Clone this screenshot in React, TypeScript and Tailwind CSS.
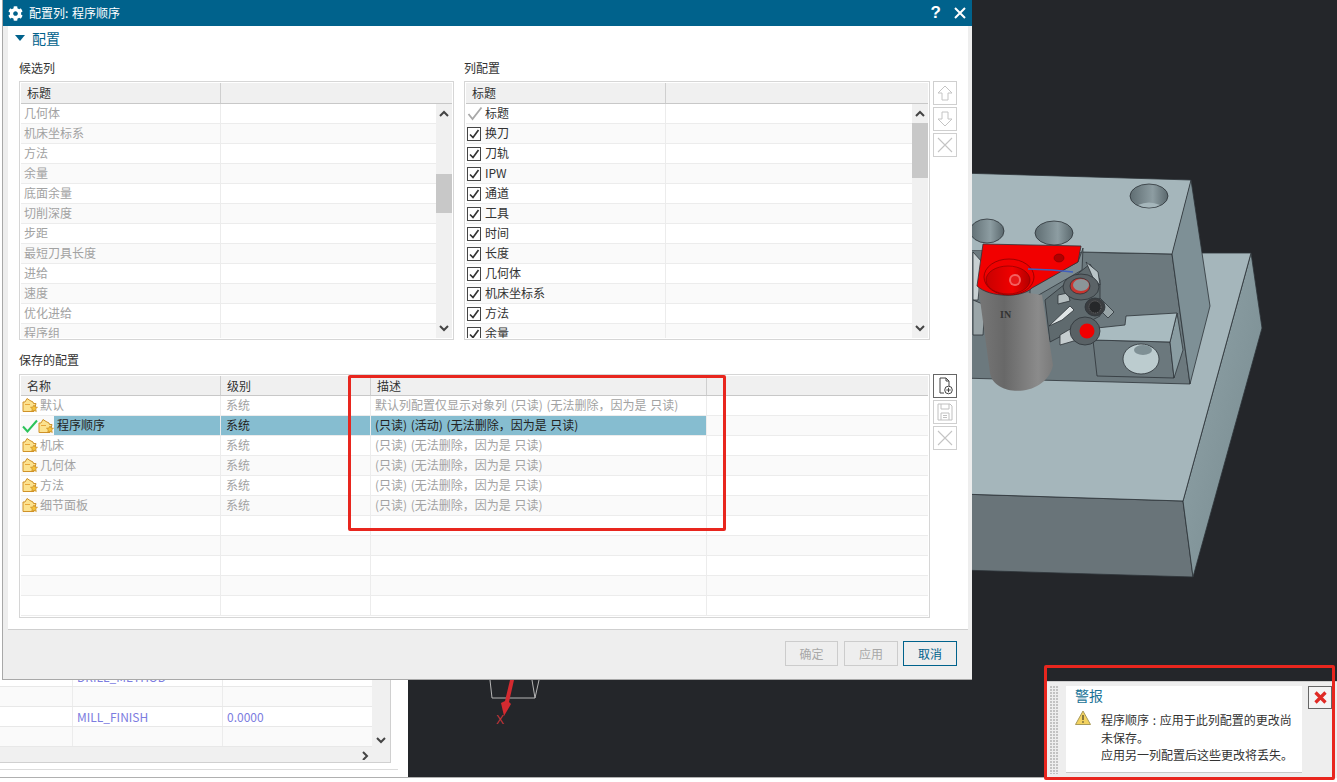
import React from "react";
import { FaCog } from "react-icons/fa";

const FONT = "font-['Noto_Sans_CJK_SC','Liberation_Sans',sans-serif]";

function Chevron({ dir }: { dir: "up" | "down" | "right" }) {
  const d = dir === "up" ? "M1 6 L5 2 L9 6" : dir === "down" ? "M1 2 L5 6 L9 2" : "M3 1 L7 5 L3 9";
  return (
    <svg width="10" height="10" viewBox="0 0 10 8" fill="none" stroke="#444" strokeWidth="2">
      <path d={d} />
    </svg>
  );
}

function Scrollbar({ top, thumb, gap }: { top: number; thumb: number; gap: number }) {
  return (
    <div className="w-[16px] shrink-0 bg-[#f0f0f0] flex flex-col items-center">
      <div className="w-full flex items-center justify-center" style={{ height: top }}>
        <Chevron dir="up" />
      </div>
      <div style={{ height: gap }} />
      <div className="w-full bg-[#c8c8c8]" style={{ height: thumb }} />
      <div className="mt-auto h-[20px] w-full flex items-center justify-center">
        <Chevron dir="down" />
      </div>
    </div>
  );
}

function Checkbox() {
  return (
    <span className="w-[14px] h-[14px] border border-[#444] bg-white flex items-center justify-center shrink-0">
      <svg width="12" height="12" viewBox="0 0 12 12" fill="none" stroke="#333" strokeWidth="1.7">
        <path d="M2 6.5 L5 9.5 L10.5 2" />
      </svg>
    </span>
  );
}

function GrayCheck() {
  return (
    <svg width="16" height="16" viewBox="0 0 16 16" fill="none" stroke="#a8a8a8" strokeWidth="1.8" className="shrink-0">
      <path d="M1.5 9 L5.5 14 L14.5 2.5" />
    </svg>
  );
}

function FolderIcon() {
  return (
    <svg width="16" height="16" viewBox="0 0 16 16" className="shrink-0">
      <path d="M1 14.5 V5 L3 5 L5 1.5 L8 3.5 L11 5 L11.5 6.5 L14 6.5 L12 14.5 Z" fill="#fce28f" stroke="#cf9228" strokeWidth="1" />
      <path d="M3 7.5 L8 7.5" stroke="#e8a63c" strokeWidth="1" />
      <path d="M12 8 L13 10 L15.5 10.3 L13.7 11.8 L14.3 14.5 L12 13.2 L9.7 14.5 L10.3 11.8 L8.5 10.3 L11 10 Z" fill="#f6c33c" stroke="#c98c22" strokeWidth="0.7" />
    </svg>
  );
}

function HeaderCell({ width, children, grow }: { width?: number; children?: React.ReactNode; grow?: boolean }) {
  return (
    <div
      className={`h-full flex items-center pl-[6px] border-r border-[#cfcfcf] text-[#333] shrink-0 ${grow ? "flex-1 border-r-0" : ""}`}
      style={grow ? undefined : { width }}
    >
      {children}
    </div>
  );
}

function Cell({ width, children, grow, pl = 5, lift = true }: { width?: number; children?: React.ReactNode; grow?: boolean; pl?: number; lift?: boolean }) {
  return (
    <div
      className={`h-full flex items-center border-r border-[#ececec] whitespace-nowrap overflow-hidden shrink-0 ${lift ? "pb-[2px]" : ""} ${grow ? "flex-1 border-r-0" : ""}`}
      style={grow ? { paddingLeft: pl } : { width, paddingLeft: pl }}
    >
      {children}
    </div>
  );
}

const candidates = ["几何体", "机床坐标系", "方法", "余量", "底面余量", "切削深度", "步距", "最短刀具长度", "进给", "速度", "优化进给", "程序组"];
const configured = ["换刀", "刀轨", "IPW", "通道", "工具", "时间", "长度", "几何体", "机床坐标系", "方法", "余量"];

function TopTable({ className, colW, children, top, thumb, gap }: { className: string; colW: number; children: React.ReactNode; top: number; thumb: number; gap: number }) {
  return (
    <div className={`h-[259px] border border-[#d6d6d6] p-px flex flex-col overflow-hidden bg-white ${className}`}>
      <div className="h-[21px] shrink-0 flex bg-[#f0f0f0] border-b border-[#c8c8c8]">
        <HeaderCell width={colW}>标题</HeaderCell>
        <HeaderCell grow />
      </div>
      <div className="flex-1 min-h-0 flex">
        <div className="flex-1 min-w-0 overflow-hidden">{children}</div>
        <Scrollbar top={top} thumb={thumb} gap={gap} />
      </div>
    </div>
  );
}

function ToolBtn({ children, active }: { children: React.ReactNode; active?: boolean }) {
  return (
    <div className={`w-[24px] h-[24px] border flex items-center justify-center bg-white ${active ? "border-[#666]" : "border-[#cfcfcf]"}`}>
      {children}
    </div>
  );
}

const XIcon = () => (
  <svg width="20" height="20" viewBox="0 0 20 20" stroke="#c4c4c4" strokeWidth="1.1" fill="none">
    <path d="M3 3 L17 17 M17 3 L3 17" />
  </svg>
);

const saved = [
  ["默认", "默认列配置仅显示对象列 (只读) (无法删除，因为是 只读)"],
  ["程序顺序", "(只读) (活动) (无法删除，因为是 只读)"],
  ["机床", "(只读) (无法删除，因为是 只读)"],
  ["几何体", "(只读) (无法删除，因为是 只读)"],
  ["方法", "(只读) (无法删除，因为是 只读)"],
  ["细节面板", "(只读) (无法删除，因为是 只读)"],
  ["", ""],
  ["", ""],
  ["", ""],
  ["", ""],
  ["", ""],
];

function SavedTable() {
  return (
    <div className="flex-1 h-[244px] border border-[#d6d6d6] p-px flex flex-col overflow-hidden">
      <div className="h-[20px] shrink-0 flex bg-[#f0f0f0] border-b border-[#c8c8c8]">
        <HeaderCell width={200}>名称</HeaderCell>
        <HeaderCell width={150}>级别</HeaderCell>
        <HeaderCell width={336}>描述</HeaderCell>
        <HeaderCell grow />
      </div>
      {saved.map((r, i) => {
        const sel = i === 1;
        const empty = !r[0];
        return (
          <div key={i} className={`h-[20px] shrink-0 flex border-b border-[#ececec] ${i % 2 ? "bg-[#fafafa]" : "bg-white"} ${sel ? "text-[#222]" : "text-[#a2a2a2]"}`}>
            {sel ? (
              <div className="w-[200px] h-full flex items-center shrink-0">
                <svg width="16" height="16" viewBox="0 0 16 16" fill="none" stroke="#2cc35a" strokeWidth="2" className="ml-px shrink-0">
                  <path d="M1 8.5 L5.5 13.5 L15 2.5" />
                </svg>
                <FolderIcon />
                <div className="flex-1 h-full bg-[#86bdd0] flex items-center pl-[3px] pb-[2px] border-r border-[#ececec]">{r[0]}</div>
              </div>
            ) : (
              <Cell width={200} pl={1}>
                {!empty && (
                  <span className="flex items-center gap-[2px]">
                    <FolderIcon />
                    {r[0]}
                  </span>
                )}
              </Cell>
            )}
            <div className={`flex h-full ${sel ? "bg-[#86bdd0]" : ""}`}>
              <Cell width={150}>{!empty && "系统"}</Cell>
              <Cell width={336} pl={4}>{r[1]}</Cell>
            </div>
            <Cell grow />
          </div>
        );
      })}
    </div>
  );
}

function Dialog() {
  return (
    <div className={`absolute left-[2px] top-0 w-[970px] h-[680px] flex flex-col bg-[#eeeeee] border-l border-b border-[#a8a8a8] text-[12px] [word-spacing:1px] ${FONT}`}>
      <div className="h-[26px] shrink-0 bg-[#00628c] flex items-center text-white pl-[5px]">
        <FaCog className="w-[15px] h-[15px]" />
        <span className="ml-[6px]">配置列: 程序顺序</span>
        <span className="ml-auto font-bold text-[17px] font-['Liberation_Sans',sans-serif] mr-[12px]">?</span>
        <svg width="14" height="14" viewBox="0 0 14 14" stroke="white" strokeWidth="2" className="mr-[5px]">
          <path d="M2 2 L12 12 M12 2 L2 12" />
        </svg>
      </div>
      <div className="flex-1 min-h-0 ml-[5px] mr-[4px] bg-white border-b border-[#cfcfcf] pl-[11px] flex flex-col">
        <div className="h-[26px] shrink-0 flex items-center pb-[2px] text-[#00628c] text-[14px]">
          <svg width="10" height="7" viewBox="0 0 10 7" className="ml-[-4px] mr-[7px]" fill="#00628c">
            <path d="M0 0 H10 L5 6 Z" />
          </svg>
          配置
        </div>
        <div className="h-[29px] shrink-0 flex text-[#333]">
          <div className="w-[445px] pt-[7px] leading-[18px]">候选列</div>
          <div className="pt-[7px] leading-[18px]">列配置</div>
        </div>
        <div className="flex shrink-0">
          <TopTable className="w-[435px] text-[#a2a2a2]" colW={200} top={20} gap={50} thumb={39}>
            {candidates.map((c, i) => (
              <div key={c} className={`h-[20px] flex border-b border-[#ececec] ${i % 2 ? "bg-[#fafafa]" : ""}`}>
                <Cell width={200} pl={3}>{c}</Cell>
                <Cell grow />
              </div>
            ))}
          </TopTable>
          <div className="w-[10px]" />
          <TopTable className="w-[466px] text-[#333]" colW={200} top={19} gap={0} thumb={55}>
            <div className="h-[20px] flex border-b border-[#ececec]">
              <Cell width={200} pl={1}>
                <span className="flex items-center gap-[2px]">
                  <GrayCheck />
                  标题
                </span>
              </Cell>
              <Cell grow />
            </div>
            {configured.map((c, i) => (
              <div key={i} className={`h-[20px] flex border-b border-[#ececec] ${i % 2 ? "" : "bg-[#fafafa]"}`}>
                <Cell width={200} pl={1} lift={false}>
                  <span className="flex items-center gap-[4px] leading-[16px]">
                    <Checkbox />
                    <span className="mt-[-2px]">{c}</span>
                  </span>
                </Cell>
                <Cell grow />
              </div>
            ))}
          </TopTable>
          <div className="ml-[3px] flex flex-col gap-[2px]">
            <ToolBtn>
              <svg width="18" height="18" viewBox="0 0 18 18" fill="none" stroke="#c4c4c4" strokeWidth="1">
                <path d="M9 2 L16 9 H12 V16 H6 V9 H2 Z" />
              </svg>
            </ToolBtn>
            <ToolBtn>
              <svg width="18" height="18" viewBox="0 0 18 18" fill="none" stroke="#c4c4c4" strokeWidth="1">
                <path d="M9 16 L16 9 H12 V2 H6 V9 H2 Z" />
              </svg>
            </ToolBtn>
            <ToolBtn>
              <XIcon />
            </ToolBtn>
          </div>
        </div>
        <div className="h-[34px] shrink-0 pt-[11px] leading-[18px] text-[#333]">保存的配置</div>
        <div className="flex">
          <SavedTable />
          <div className="ml-[3px] mr-[11px] flex flex-col gap-[2px]">
            <ToolBtn active>
              <svg width="20" height="20" viewBox="0 0 20 20" fill="none" stroke="#444" strokeWidth="1">
                <path d="M5 17 V2 H11 L14 5 V10 M11 2 V5 H14 M5 17 H9" />
                <circle cx="13.5" cy="14" r="3.8" />
                <path d="M13.5 11.8 V16.2 M11.3 14 H15.7" />
              </svg>
            </ToolBtn>
            <ToolBtn>
              <svg width="20" height="20" viewBox="0 0 20 20" fill="none" stroke="#c0c0c0" strokeWidth="1">
                <path d="M3 2 H15 L17 4 V18 H3 Z" />
                <path d="M6 2 V7 H14 V2 M6 18 V11 H14 V18 M8 13.5 H12 M8 15.5 H12" />
              </svg>
            </ToolBtn>
            <ToolBtn>
              <XIcon />
            </ToolBtn>
          </div>
        </div>
      </div>
      <div className="h-[49px] shrink-0 flex items-start justify-end pt-[11px] pr-[15px] gap-[5px]">
        <div className="w-[53px] h-[25px] mr-px border border-[#cccccc] flex items-center justify-center text-[#a8a8a8]">确定</div>
        <div className="w-[54px] h-[25px] border border-[#cccccc] flex items-center justify-center text-[#a8a8a8]">应用</div>
        <div className="w-[54px] h-[25px] border border-[#00628c] flex items-center justify-center text-[#00628c]">取消</div>
      </div>
    </div>
  );
}

function Alert() {
  return (
    <div className={`absolute left-[1047px] top-[681px] w-[290px] h-[97px] bg-[#eeeeee] border-t border-[#cfcfcf] flex items-start text-[12px] [word-spacing:1px] ${FONT}`}>
      <svg width="8" height="88" className="ml-[3px] mt-[4px] shrink-0">
        <defs>
          <pattern id="grip" width="3" height="3" patternUnits="userSpaceOnUse">
            <rect width="2" height="2" fill="#c2c2c2" />
          </pattern>
        </defs>
        <rect width="8" height="88" fill="url(#grip)" />
      </svg>
      <div className="ml-[8px] mt-[4px] w-[236px] h-[87px] shrink-0 bg-white border-b border-[#c8c8c8] pl-[9px] relative">
        <div className="text-[14px] text-[#1a7396] leading-[20px] mt-[-1px]">警报</div>
        <div className="flex mt-[5px]">
          <svg width="16" height="16" viewBox="0 0 16 16" className="shrink-0">
            <path d="M8 1 L15.5 14.5 H0.5 Z" fill="#f3d25f" stroke="#a89a5a" strokeWidth="1" />
            <path d="M8 5 V10 M8 11.2 V12.8" stroke="#5a5030" strokeWidth="1.4" />
          </svg>
          <div className="ml-[10px] w-[200px] text-[#333] leading-[17.5px] mt-[1px]">
            程序顺序 : 应用于此列配置的更改尚未保存。
            <br />
            应用另一列配置后这些更改将丢失。
          </div>
        </div>
      </div>
      <div className="ml-[6px] mt-[4px] w-[24px] h-[23px] border border-[#666] bg-[#f4f4f4] flex items-center justify-center shrink-0">
        <svg width="13" height="13" viewBox="0 0 13 13" stroke="#df2a25" strokeWidth="3.2">
          <path d="M1.5 1.5 L11.5 11.5 M11.5 1.5 L1.5 11.5" />
        </svg>
      </div>
    </div>
  );
}

function Model() {
  const s = { stroke: "#2d3438", strokeWidth: 0.8 };
  return (
    <svg viewBox="408 0 929 777" className="w-full h-full block">
      <defs>
        <linearGradient id="hole" x1="0" x2="1" y1="0" y2="0">
          <stop offset="0" stopColor="#5f6d72" />
          <stop offset="0.6" stopColor="#8d9da2" />
          <stop offset="1" stopColor="#5a686d" />
        </linearGradient>
        <linearGradient id="cyl" x1="0" x2="1" y1="0" y2="0">
          <stop offset="0" stopColor="#777777" />
          <stop offset="0.35" stopColor="#686868" />
          <stop offset="0.8" stopColor="#8b8b8b" />
          <stop offset="1" stopColor="#7a7a7a" />
        </linearGradient>
        <linearGradient id="redc" x1="0" x2="1" y1="0" y2="0">
          <stop offset="0" stopColor="#c90000" />
          <stop offset="0.6" stopColor="#f00000" />
          <stop offset="1" stopColor="#b30000" />
        </linearGradient>
        <linearGradient id="side" x1="0" x2="1" y1="0" y2="1">
          <stop offset="0" stopColor="#92a5aa" />
          <stop offset="1" stopColor="#76898e" />
        </linearGradient>
      </defs>
      {/* lower block */}
      <polygon points="960,494 1183,501 1193,577 960,570" fill="#697479" {...s} />
      <polygon points="1251,253 1262,328 1193,577 1183,501" fill="url(#side)" {...s} />
      <polygon points="1202,253 1251,253 1183,501 960,494 960,300" fill="#a5b6bb" {...s} />
      {/* pocket */}
      <polygon points="960,250 1172,254 1190,384 960,378" fill="#6c797e" {...s} />
      <polygon points="960,173 960,250 1172,254 1191,180" fill="#a5b6bb" />
      <line x1="960" y1="173" x2="1191" y2="180" stroke="#2d3438" strokeWidth="0.8" />
      <line x1="1082" y1="252" x2="1172" y2="254" stroke="#2d3438" strokeWidth="0.8" />
      <polygon points="1191,180 1210,306 1190,384 1172,254" fill="#7e9096" {...s} />
      {/* holes */}
      <ellipse cx="1149" cy="196" rx="19" ry="12" fill="url(#hole)" {...s} />
      <path d="M1138,205 Q1149,200 1160,205 Q1149,210 1138,205 Z" fill="#a5b6bb" />
      <ellipse cx="1054" cy="233" rx="19" ry="12" fill="url(#hole)" {...s} />
      <ellipse cx="987" cy="231" rx="17" ry="12" fill="url(#hole)" {...s} />
      {/* fixture bits */}
      <polygon points="973,252 982,262 978,300 973,300" fill="#c8d0d2" {...s} />
      <polygon points="973,300 985,305 983,335 973,335" fill="#9aa5a8" {...s} />
      <polygon points="1045,300 1090,264 1100,280 1100,316 1050,342" fill="#5f6a6e" {...s} />
      <polygon points="1049,326 1070,306 1074,310 1062,320" fill="#dfe5e6" {...s} />
      <polygon points="1058,295 1068,293 1070,301 1058,304" fill="#b5bec0" {...s} />
      <polygon points="1060,335 1072,328 1077,340 1060,345" fill="#c5cdcf" {...s} />
      <polygon points="1086,262 1098,272 1100,285 1094,280" fill="#b9c4c7" {...s} />
      <polygon points="1100,298 1114,312 1108,318 1096,306" fill="#98a4a7" {...s} />
      {/* stepped block */}
      <polygon points="1093,340 1170,342 1174,378 1097,376" fill="#6b787d" {...s} />
      <polygon points="1177,313 1183,350 1174,378 1170,342" fill="#8a9da2" {...s} />
      <polygon points="1093,340 1097,328 1125,325 1126,316 1177,313 1170,342" fill="#a9bbc0" {...s} />
      <ellipse cx="1141" cy="359" rx="18" ry="15" fill="#bccccf" {...s} />
      <ellipse cx="1143" cy="350" rx="9" ry="5" fill="#7f9095" />
      {/* washers */}
      <ellipse cx="1081" cy="287" rx="18" ry="13" fill="#5b6367" {...s} />
      <ellipse cx="1080" cy="286" rx="10" ry="8" fill="#c9342f" {...s} />
      <ellipse cx="1081" cy="285" rx="8" ry="6" fill="#8b9598" />
      <ellipse cx="1095" cy="307" rx="10" ry="9" fill="#3a3d40" {...s} />
      <circle cx="1095" cy="307" r="6" fill="#26282a" stroke="#6a6a6a" strokeWidth="1" strokeDasharray="1 1" />
      <ellipse cx="1085" cy="331" rx="15" ry="14" fill="#596165" {...s} />
      <circle cx="1087" cy="331" r="7.5" fill="#f00000" />
      {/* arm */}
      <polygon points="1030,288 1078,262 1083,248 1082,270 1030,300" fill="#7d8b90" {...s} />
      {/* cylinder */}
      <path d="M978,285 L990,373 C994,398 1046,398 1053,365 L1042,295 Z" fill="url(#cyl)" />
      <text x="1000" y="318" fontSize="10" fontWeight="700" fontFamily="'Liberation Serif',serif" fill="#333">IN</text>
      {/* red top */}
      <path d="M983,244 L1081,246 L1078,262 L1032,288 C1022,298 990,298 977,286 Z" fill="#f20000" {...s} />
      <ellipse cx="1009" cy="277" rx="25" ry="18" fill="#f00000" stroke="#7a0000" strokeWidth="0.7" />
      <ellipse cx="1008" cy="280" rx="22" ry="14" fill="url(#redc)" stroke="#7a0000" strokeWidth="0.6" />
      <circle cx="1015" cy="280" r="6" fill="#f36060" />
      <circle cx="1015" cy="280" r="4" fill="#e81818" />
      <ellipse cx="1059" cy="258" rx="5" ry="4" fill="#b00000" stroke="#6a0000" strokeWidth="0.5" />
      <path d="M1028,269 L1052,270 L1073,272" stroke="#3f5fc0" strokeWidth="1.4" fill="none" />
      {/* axis */}
      <path d="M490,680 L492,698 L535,698 L539,680 M532,680 L535,698" stroke="#b5b5b5" strokeWidth="1" fill="none" />
      <path d="M510,680 L514,680 L509,702 L511,704 L504,716 L501,703 L505,701 Z" fill="#d42a30" />
      <text x="496" y="724" fontSize="12" fill="#c9353a" fontFamily="'Liberation Sans',sans-serif">X</text>
    </svg>
  );
}

function LeftPanel() {
  const rows = [
    ["DRILL_METHOD", ""],
    ["", ""],
    ["MILL_FINISH", "0.0000"],
    ["", ""],
  ];
  return (
    <div className={`w-[408px] h-full shrink-0 bg-white flex flex-col justify-end text-[12px] ${FONT}`}>
      <div className="w-[391px] border-r border-[#d0d0d0] flex">
        <div className="flex-1 min-w-0">
          {rows.map((r, i) => (
            <div key={i} className={`h-[20px] flex border-b border-[#e8e8e8] text-[#7c7ce0] ${i % 2 ? "bg-[#fafafa]" : "bg-white"}`}>
              <Cell width={73} lift={false} />
              <Cell width={150} lift={false} pl={4}>{r[0]}</Cell>
              <Cell grow lift={false} pl={4}>{r[1]}</Cell>
            </div>
          ))}
        </div>
        <div className="w-[18px] bg-[#f0f0f0] flex flex-col justify-end items-center pb-[2px]">
          <Chevron dir="down" />
        </div>
      </div>
      <div className="w-[391px] h-[16px] bg-[#f0f0f0] border-r border-b border-[#d0d0d0] flex items-center justify-end pr-[20px] shrink-0">
        <Chevron dir="right" />
      </div>
      <div className="h-[7px] w-[398px] border-b border-[#dcdcdc] shrink-0" />
      <div className="h-[7px] shrink-0" />
    </div>
  );
}

export default function App() {
  return (
    <div className="relative w-[1337px] h-[782px] overflow-hidden bg-white">
      <div className="h-[778px] flex border-b border-[#b0b0b0]">
        <LeftPanel />
        <div className="flex-1 min-w-0 h-[777px] bg-[#24262a]">
          <Model />
        </div>
      </div>
      <Dialog />
      <Alert />
      <div className="absolute left-[348px] top-[375px] w-[378px] h-[156px] border-[3px] border-[#e8261e] rounded-[2px]" />
      <div className="absolute left-[1044px] top-[665px] w-[291px] h-[115px] border-[3px] border-[#e8261e] rounded-[2px]" />
    </div>
  );
}
